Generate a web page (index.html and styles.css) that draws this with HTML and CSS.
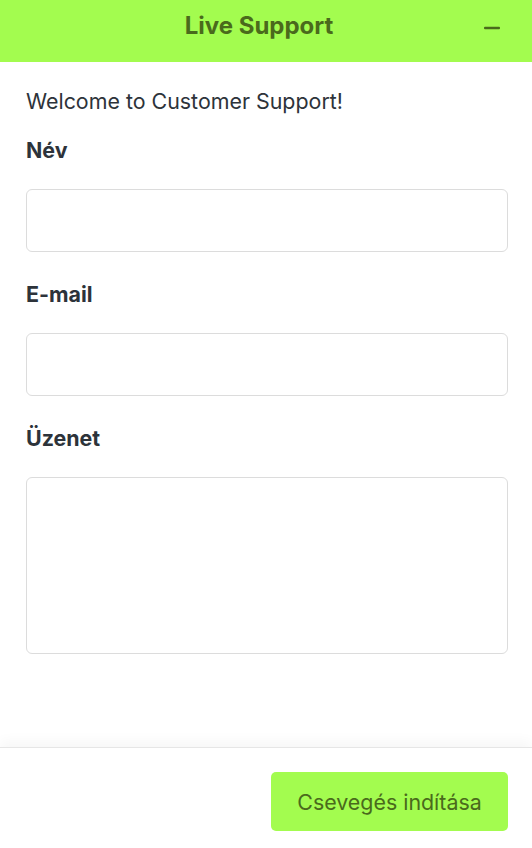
FILE: index.html
```html
<!DOCTYPE html>
<html lang="hu">
<head>
<meta charset="utf-8">
<title>Live Support</title>
<link rel="stylesheet" href="styles.css">
</head>
<body>
<div class="widget">
  <header class="header">
    <h1 class="title">Live Support</h1>
    <button class="minimize" type="button" aria-label="Minimize">
      <svg width="16" height="4" viewBox="0 0 16 4"><rect x="0" y="0.75" width="16" height="2.5" rx="1" fill="currentColor"/></svg>
    </button>
  </header>
  <main class="content">
    <p class="welcome">Welcome to Customer Support!</p>
    <div class="field">
      <label class="label" for="name">Név</label>
      <input class="input" id="name" type="text">
    </div>
    <div class="field">
      <label class="label" for="email">E-mail</label>
      <input class="input" id="email" type="email">
    </div>
    <div class="field">
      <label class="label" for="msg">Üzenet</label>
      <textarea class="input textarea" id="msg"></textarea>
    </div>
  </main>
  <footer class="footer">
    <button class="start" type="button">Csevegés indítása</button>
  </footer>
</div>
</body>
</html>
```

FILE: styles.css
```css
* { box-sizing: border-box; }
html, body { margin: 0; padding: 0; height: 100%; }
body {
  font-family: Inter, "Noto Sans", "Liberation Sans", sans-serif;
  color: #2d333a;
  background: #fff;
}
.widget {
  display: flex;
  flex-direction: column;
  height: 100vh;
}
.header {
  height: 62px;
  flex: none;
  background: #a3fc4f;
  display: flex;
  align-items: center;
  justify-content: center;
  padding: 0 14px 10px 0;
  position: relative;
}
.title {
  margin: 0;
  font-size: 24px;
  font-weight: 700;
  color: #4a6a1c;
  line-height: 30px;
}
.minimize {
  position: absolute;
  right: 32px;
  top: 26px;
  padding: 0;
  border: 0;
  background: none;
  color: #4a6a1c;
  width: 16px;
  height: 4px;
  display: block;
}
.minimize svg { display: block; }
.content {
  flex: 1;
  padding: 24px 24px 0 26px;
  display: flex;
  flex-direction: column;
  gap: 27px;
}
.welcome {
  margin: 0 0 -8px;
  font-size: 21.4px;
  line-height: 30px;
}
.field {
  display: flex;
  flex-direction: column;
  gap: 24px;
}
.label {
  font-size: 21.4px;
  font-weight: 700;
  line-height: 30px;
}
.input {
  height: 63px;
  border: 1px solid #dcdcdc;
  border-radius: 6px;
  font: inherit;
  padding: 0 16px;
  background: #fff;
  outline: none;
}
.textarea {
  height: 177px;
  resize: none;
  padding: 12px 16px;
}
.footer {
  flex: none;
  height: 101px;
  border-top: 1px solid #e6e6e6;
  box-shadow: 0 -6px 12px rgba(0,0,0,0.035);
  display: flex;
  justify-content: flex-end;
  align-items: flex-start;
  padding: 24px 24px 0 0;
}
.start {
  width: 237px;
  height: 59px;
  border: 0;
  border-radius: 5px;
  background: #a3fc4f;
  color: #4a6a1c;
  font-family: inherit;
  font-size: 21.4px;
  font-weight: 400;
  cursor: pointer;
}
```
